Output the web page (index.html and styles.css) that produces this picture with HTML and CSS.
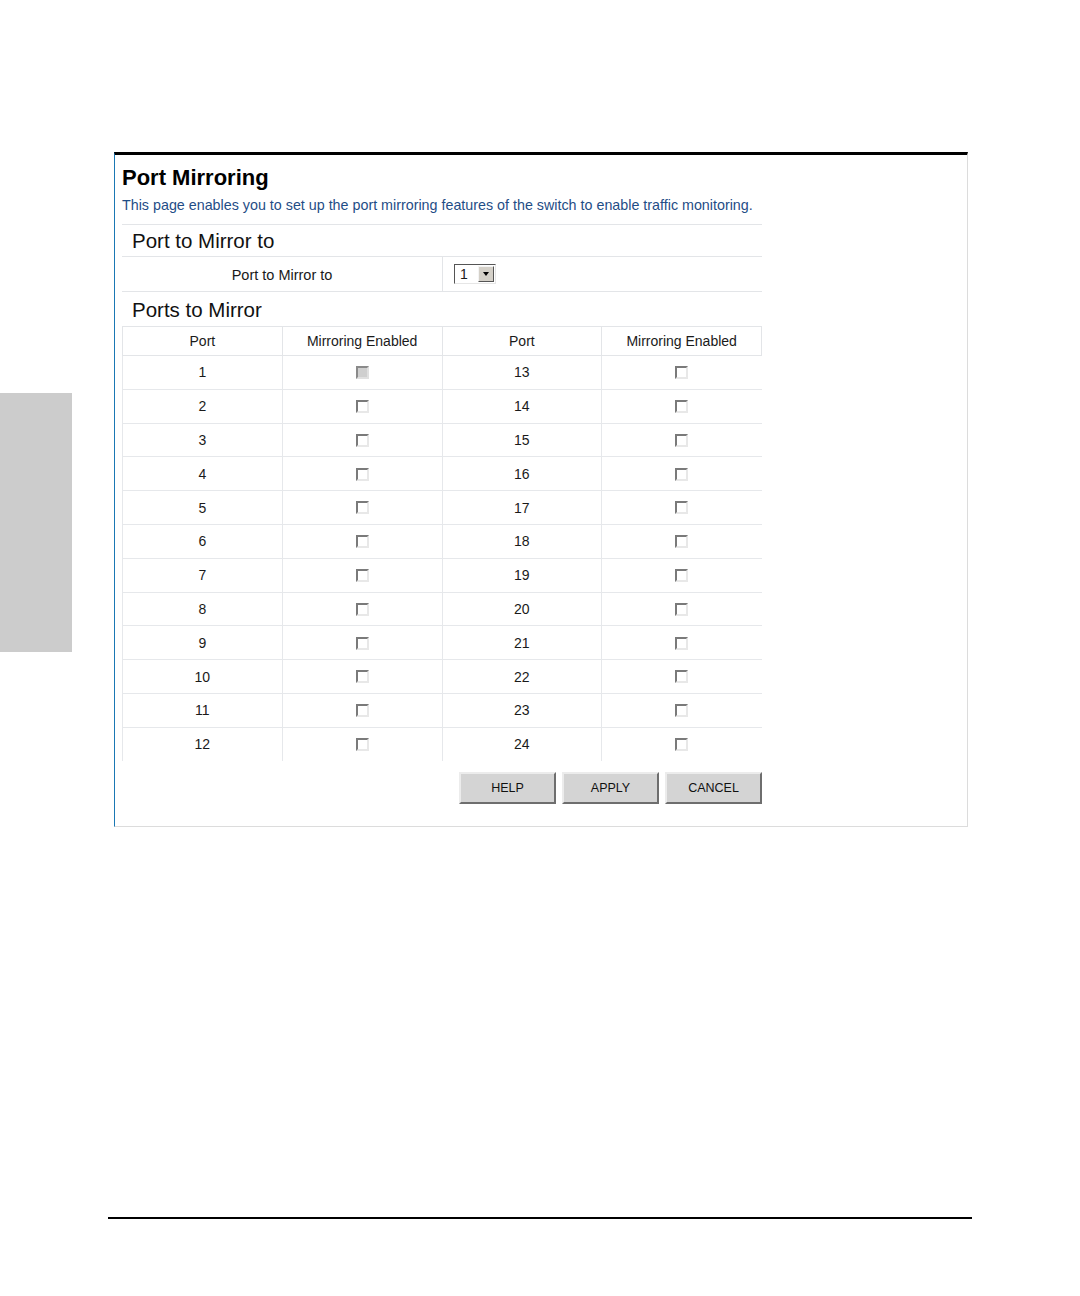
FILE: index.html
```html
<!DOCTYPE html>
<html lang="en">
<head>
    <meta charset="UTF-8">
    <title>Port Mirroring</title>
    <link rel="stylesheet" href="styles.css">
</head>
<body>
    <div class="page">
        <div class="side-tab"></div>

        <div class="frame">
            <h1 class="title">Port Mirroring</h1>
            <p class="desc">This page enables you to set up the port mirroring features of the switch to enable traffic monitoring.</p>

            <div class="panel">
                <div class="section-head first">Port to Mirror to</div>
                <div class="mirror-row">
                    <div class="mirror-label">Port to Mirror to</div>
                    <div class="mirror-value">
                        <span class="select">
                            <span class="select-text">1</span>
                            <span class="select-btn"><span class="arrow"></span></span>
                        </span>
                    </div>
                </div>

                <div class="section-head">Ports to Mirror</div>
                <table class="ports">
                    <thead>
                        <tr>
                            <th>Port</th>
                            <th>Mirroring Enabled</th>
                            <th>Port</th>
                            <th>Mirroring Enabled</th>
                        </tr>
                    </thead>
                    <tbody id="port-rows"></tbody>
                </table>

                <div class="actions">
                    <button class="btn">HELP</button>
                    <button class="btn">APPLY</button>
                    <button class="btn">CANCEL</button>
                </div>
            </div>
        </div>
    </div>

    <div class="page-rule"></div>

    <script>
        var rows = '';
        for (var i = 1; i <= 12; i++) {
            var box = i === 1 ? '<span class="check disabled"></span>' : '<span class="check"></span>';
            rows += '<tr>' +
                '<td>' + i + '</td>' +
                '<td>' + box + '</td>' +
                '<td>' + (i + 12) + '</td>' +
                '<td><span class="check"></span></td>' +
                '</tr>';
        }
        document.getElementById('port-rows').innerHTML = rows;
    </script>
</body>
</html>
```

FILE: styles.css
```css
body {
    margin: 0;
    background: #fff;
    font-family: "Liberation Sans", Arial, sans-serif;
    color: #1a1a1a;
}
.page {
    display: flex;
    align-items: flex-start;
    padding-top: 152px;
}
.side-tab {
    width: 72px;
    height: 259px;
    margin-top: 241px;
    background: #cccccc;
}
.frame {
    width: 845px;
    margin-left: 42px;
    padding: 10px 0 22px 7px;
    border-top: 3px solid #000;
    border-left: 1px solid #1a78b4;
    border-right: 1px solid #dcdcdc;
    border-bottom: 1px solid #dcdcdc;
}
.title {
    margin: 0;
    font-size: 22px;
    line-height: 26px;
    font-weight: bold;
    color: #000;
}
.desc {
    margin: 5px 0 0;
    font-size: 14.3px;
    line-height: 18px;
    color: #1f4d86;
}
.panel {
    width: 640px;
    margin-top: 10px;
}
.section-head {
    height: 34px;
    line-height: 35px;
    padding-left: 10px;
    font-size: 20.5px;
    color: #111;
}
.section-head.first {
    border-top: 1px solid #e3e5e8;
    height: 31px;
    line-height: 31px;
}
.mirror-row {
    display: flex;
    height: 34px;
    border-top: 1px solid #e3e5e8;
    border-bottom: 1px solid #e3e5e8;
    font-size: 14.5px;
}
.mirror-label {
    width: 320px;
    border-right: 1px solid #e3e5e8;
    display: flex;
    align-items: center;
    justify-content: center;
    padding-top: 2px;
}
.mirror-value {
    display: flex;
    align-items: center;
    padding-left: 11px;
}
.select {
    display: flex;
    align-items: center;
    width: 38px;
    height: 16px;
    padding: 1px;
    background: #fff;
    border: 1px solid;
    border-color: #555 #e6e6e6 #e6e6e6 #555;
}
.select-text {
    flex: 1;
    padding-left: 4px;
    font-size: 14px;
    line-height: 16px;
}
.select-btn {
    width: 14px;
    height: 14px;
    background: #d4d0c8;
    border: 1px solid;
    border-color: #f4f4f4 #555 #555 #f4f4f4;
    display: flex;
    align-items: center;
    justify-content: center;
}
.arrow {
    width: 0;
    height: 0;
    border-left: 3.5px solid transparent;
    border-right: 3.5px solid transparent;
    border-top: 4px solid #000;
}
.ports {
    width: 640px;
    border-collapse: collapse;
    table-layout: fixed;
    font-size: 14px;
}
.ports th {
    height: 28px;
    padding: 0;
    font-weight: normal;
    border: 1px solid #e3e5e8;
    color: #1a1a1a;
}
.ports td {
    height: 32.8px;
    padding: 0;
    text-align: center;
    border-left: 1px solid #e6e8eb;
    border-bottom: 1px solid #e6e8eb;
}
.ports tr:last-child td {
    border-bottom: none;
}
.check {
    display: inline-block;
    vertical-align: middle;
    width: 9px;
    height: 9px;
    background: #fff;
    border: 2px solid;
    border-color: #7a7a7a #e8e8e8 #e8e8e8 #7a7a7a;
    position: relative;
    top: -1px;
}
.check.disabled {
    background: #cfcfcf;
    border-color: #8a8a8a #e0e0e0 #e0e0e0 #8a8a8a;
}
.actions {
    display: flex;
    justify-content: flex-end;
    gap: 6px;
    margin-top: 11px;
}
.btn {
    width: 97px;
    height: 32px;
    padding: 0;
    font-family: "Liberation Sans", Arial, sans-serif;
    font-size: 12.5px;
    color: #111;
    background: #d4d4d4;
    border: 2px solid;
    border-color: #ececec #6e6e6e #6e6e6e #ececec;
    cursor: pointer;
}
.page-rule {
    width: 864px;
    margin: 390px 0 0 108px;
    border-top: 2px solid #000;
}
```
